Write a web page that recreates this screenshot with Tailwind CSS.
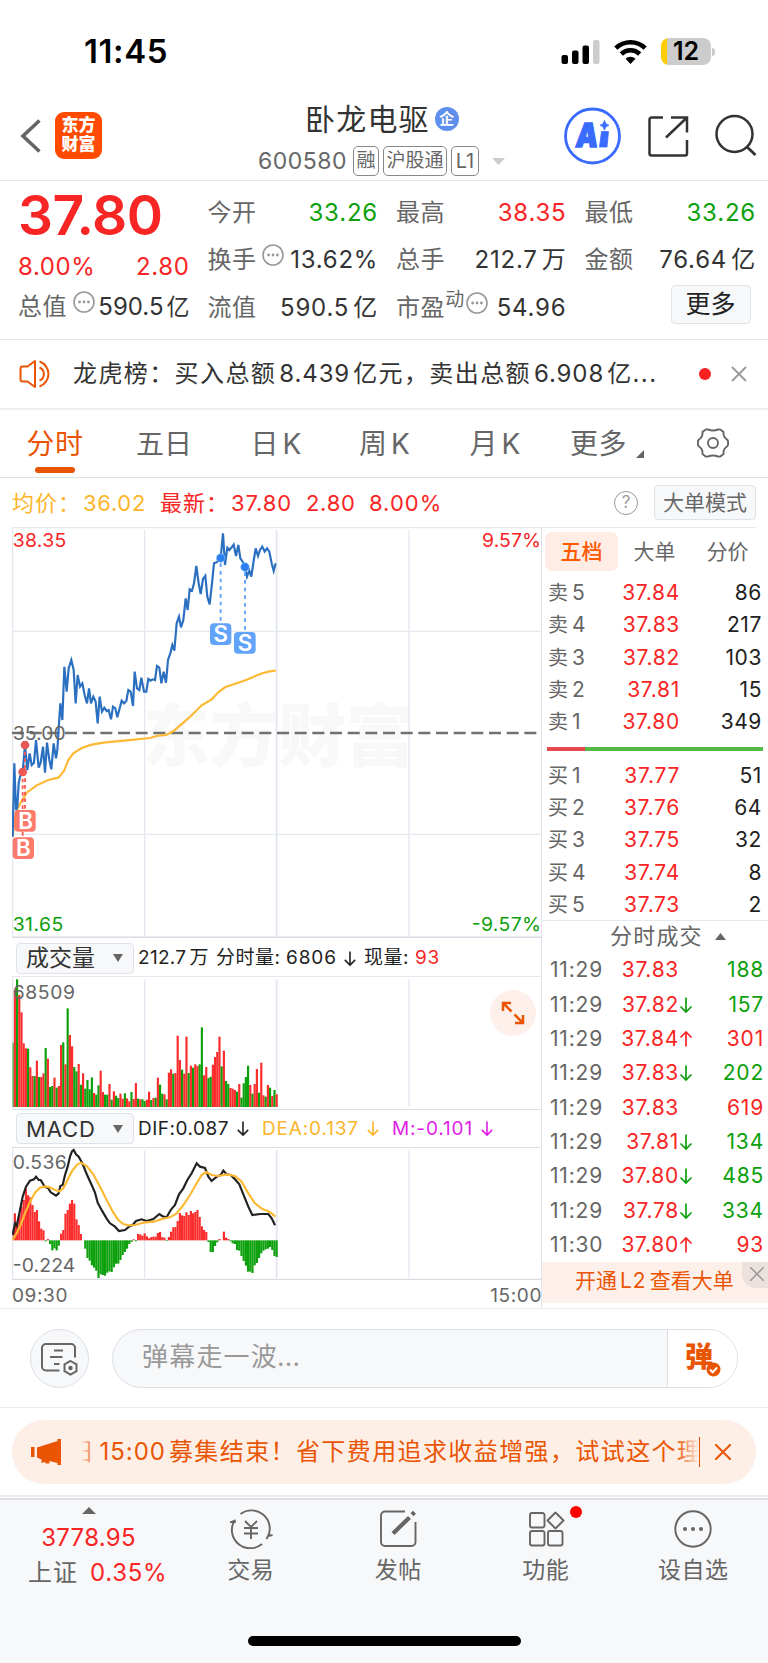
<!DOCTYPE html>
<html lang="zh-CN">
<head>
  <meta charset="UTF-8">
  <meta name="viewport" content="width=device-width, initial-scale=1.0">
  <title>卧龙电驱 600580</title>
  <script src="https://cdn.jsdelivr.net/npm/@tailwindcss/browser@4"></script>
</head>
<body class="w-[768px] h-[1663px] bg-white text-[#333] font-['Inter','Noto_Sans_CJK_SC',sans-serif] whitespace-nowrap overflow-hidden">

  <!-- Shared icons -->
  <svg class="hidden">
    <symbol id="more-dots" viewBox="0 0 22 22">
      <circle cx="11" cy="11" r="10" fill="none" stroke="#999" stroke-width="1.6"/>
      <g fill="#999"><circle cx="6.6" cy="11" r="1.4"/><circle cx="11" cy="11" r="1.4"/><circle cx="15.4" cy="11" r="1.4"/></g>
    </symbol>
    <symbol id="down" viewBox="0 0 14 18">
      <path d="M7 1.500v14.500M1.500 10.500L7 16l5.500-5.500" fill="none" stroke="currentColor" stroke-width="1.7"/>
    </symbol>
    <symbol id="up" viewBox="0 0 14 18">
      <path d="M7 16.500V2M1.500 7.500L7 2l5.500 5.500" fill="none" stroke="currentColor" stroke-width="1.7"/>
    </symbol>
  </svg>

  <!-- Status Bar -->
  <div class="h-[92px] pt-[11px] pl-[84px] pr-[53px] flex items-center text-black">
    <span class="text-[33px] leading-none font-semibold tracking-[0.6px]">11:45</span>
    <div class="ml-auto flex items-center">
      <svg class="w-[39px] h-[26px]" viewBox="0 0 39 26">
        <rect x="0.500" y="16" width="6.500" height="9" rx="2"/>
        <rect x="11" y="11.500" width="6.500" height="13.500" rx="2"/>
        <rect x="21.500" y="6.500" width="6.500" height="18.500" rx="2"/>
        <rect x="32" y="1" width="6.500" height="24" rx="2" fill="#ccc"/>
      </svg>
      <svg class="ml-[14px] w-[33px] h-[26px]" viewBox="0 0 33 26">
        <g fill="none" stroke="#000" stroke-width="4.600">
          <path d="M1.800 9.200a21 21 0 0 1 29.400 0"/>
          <path d="M7.300 15a13.200 13.200 0 0 1 18.400 0"/>
        </g>
        <path d="M16.500 25l-5-5.200a7.200 7.200 0 0 1 10 0z"/>
      </svg>
      <div class="ml-[14px] w-[50px] h-[27px] rounded-[8px] bg-linear-to-r from-[#ffcc00] from-[6px] to-[#ccc] to-[6px] flex items-center justify-center">
        <span class="text-[25px] leading-[27px] font-semibold">12</span>
      </div>
      <span class="ml-[1px] w-[3px] h-[8px] rounded-r-[3px] bg-[#ccc]"></span>
    </div>
  </div>

  <!-- Header -->
  <header class="h-[89px] border-b border-[#e6e6e6] flex">
    <div class="w-[257px] pl-[20px] pt-[20px] flex items-start">
      <svg class="w-[22px] h-[34px] mt-[7px]" viewBox="0 0 22 34"><path d="M19.500 1.500L3 17l16.500 15.500" fill="none" stroke="#666" stroke-width="3.600"/></svg>
      <div class="ml-[13px] w-[47px] h-[47px] rounded-[9px] bg-[#ff4a00] text-white text-[17px] leading-[19px] font-black text-center pt-[4px]">东方<br>财富</div>
    </div>
    <div class="w-[270px] pt-[7px]">
      <div class="pl-[48px] h-[40px] flex items-center">
        <h1 class="text-[30px] leading-[40px] tracking-[1.200px]">卧龙电驱</h1>
        <span class="ml-[5px] w-[24px] h-[24px] rounded-full bg-[#5e8fec] text-white text-[15px] leading-[23px] font-bold text-center">企</span>
      </div>
      <div class="mt-[7px] h-[30px] flex items-center text-[#666]">
        <span class="text-[23px] leading-[30px] tracking-[0.500px] pl-px w-[96px]">600580</span>
        <span class="w-[26px] h-[30px] border border-[#888] rounded-[5px] text-[19px] leading-[28px] text-center">融</span>
        <span class="ml-[4px] w-[64px] h-[30px] border border-[#888] rounded-[5px] text-[19px] leading-[28px] text-center">沪股通</span>
        <span class="ml-[4px] w-[28px] h-[30px] border border-[#888] rounded-[5px] text-[20px] leading-[28px] text-center">L1</span>
        <svg class="ml-[13px] w-[13px] h-[7px]" viewBox="0 0 13 7"><path d="M0 0h13l-6.500 7z" fill="#ccc"/></svg>
      </div>
    </div>
    <div class="pl-[37px] pt-[15px] flex items-start">
      <svg class="w-[58px] h-[58px]" viewBox="0 0 58 58">
        <circle cx="28.500" cy="29" r="27" fill="none" stroke="#3a6bff" stroke-width="2.800"/>
        <text transform="translate(11 39.500) skewX(-6)" font-size="33" font-weight="900" fill="#3a6bff" textLength="22" lengthAdjust="spacingAndGlyphs" stroke="#3a6bff" stroke-width="1.500">A</text>
        <path d="M37.500 24.500h7l-1.500 15.500h-7.500zM40.500 13.500q.8 4 4.500 4.800q-3.700.8-4.500 4.800q-.8-4-4.500-4.800q3.700-.8 4.500-4.800z" fill="#3a6bff" stroke="#3a6bff" stroke-width=".8" stroke-linejoin="round"/>
      </svg>
      <svg class="ml-[25px] mt-[8px] w-[42px] h-[42px]" viewBox="0 0 42 42">
        <path d="M16 2.500H4.500a2 2 0 0 0-2 2v34a2 2 0 0 0 2 2h33.500a2 2 0 0 0 2-2V25M24 2.500h16v15M40 2.500L19 22.500" fill="none" stroke="#333" stroke-width="2.500"/>
      </svg>
      <svg class="ml-[26px] mt-[7px] w-[42px] h-[42px]" viewBox="0 0 42 42">
        <circle cx="19.500" cy="20" r="18" fill="none" stroke="#333" stroke-width="2.500"/>
        <path d="M31.500 32.500l9 8.500" stroke="#333" stroke-width="2.800"/>
      </svg>
    </div>
  </header>

  <!-- Quote -->
  <section class="h-[159px] border-b border-[#e6e6e6] pl-[19px] pr-[13px] pt-[8px] grid grid-cols-4 gap-x-[18px] text-[24px] leading-[32px]">
    <div class="-ml-px">
      <div class="h-[53px] flex items-center text-[55px] leading-none font-semibold tracking-[-0.600px] text-[#f82525]">37.80</div>
      <div class="h-[49px] flex items-center justify-between text-[#f82525] tracking-[0.600px]"><span>8.00%</span><span>2.80</span></div>
      <div class="h-[32px] flex items-center">
        <span class="text-[#666] tracking-[0.600px]">总值</span>
        <svg class="ml-[6px] -mt-[10px] w-[22px] h-[22px]"><use href="#more-dots"/></svg>
        <span class="ml-auto flex items-baseline"><span>590.5</span><span class="ml-[3px] text-[23px]">亿</span></span>
      </div>
    </div>
    <div>
      <div class="h-[47.500px] flex items-center justify-between"><span class="text-[#666] tracking-[0.600px]">今开</span><span class="tracking-[0.800px] text-[#0ca00c]">33.26</span></div>
      <div class="h-[47.500px] flex items-center"><span class="text-[#666] tracking-[0.600px]">换手</span>
        <svg class="ml-[5px] -mt-[10px] w-[22px] h-[22px]"><use href="#more-dots"/></svg>
        <span class="ml-auto tracking-[0.700px]">13.62%</span></div>
      <div class="h-[47.500px] flex items-center justify-between"><span class="text-[#666] tracking-[0.600px]">流值</span><span class="tracking-[0.800px]">590.5<span class="ml-[4px]">亿</span></span></div>
    </div>
    <div>
      <div class="h-[47.500px] flex items-center justify-between"><span class="text-[#666] tracking-[0.600px]">最高</span><span class="tracking-[0.800px] text-[#f82525]">38.35</span></div>
      <div class="h-[47.500px] flex items-center justify-between"><span class="text-[#666] tracking-[0.600px]">总手</span><span class="tracking-[0.800px]">212.7<span class="ml-[4px]">万</span></span></div>
      <div class="h-[47.500px] flex items-center"><span class="text-[#666] tracking-[0.600px]">市盈</span><span class="text-[#666] text-[19px] -mt-[15px]">动</span>
        <svg class="ml-[2px] -mt-[10px] w-[22px] h-[22px]"><use href="#more-dots"/></svg>
        <span class="ml-auto tracking-[0.800px]">54.96</span></div>
    </div>
    <div>
      <div class="h-[47.500px] flex items-center justify-between"><span class="text-[#666] tracking-[0.600px]">最低</span><span class="tracking-[0.800px] -mr-px text-[#0ca00c]">33.26</span></div>
      <div class="h-[47.500px] flex items-center justify-between"><span class="text-[#666] tracking-[0.600px]">金额</span><span class="tracking-[0.800px] -mr-px">76.64<span class="ml-[4px]">亿</span></span></div>
      <button class="ml-[86px] mt-[1px] block w-[80px] h-[39px] rounded-[4px] border border-[#dfe2e8] bg-[#f7f8fa] text-[25px] leading-[37px] text-[#222]">更多</button>
    </div>
  </section>

  <!-- News -->
  <section class="h-[70px] border-b-2 border-[#eee] pl-[19px] pr-[21px] flex items-center">
    <svg class="w-[34px] h-[30px]" viewBox="0 0 34 30" fill="none" stroke="#ea5504" stroke-width="2">
      <path d="M16 2v26L8.500 22.500H3.500Q1.500 22.500 1.500 20.500v-11Q1.500 7.500 3.500 7.500h5z" stroke-linejoin="round"/>
      <path d="M20.500 8.500a7 7 0 0 1 0 13M20.500 2.500a13.200 13.200 0 0 1 0 25"/>
    </svg>
    <p class="ml-[20px] text-[24px] leading-[32px] tracking-[1.400px] flex items-baseline">龙虎榜：买入总额<span class="tracking-[0.900px] ml-[3px] mr-[3px]">8.439</span>亿元，卖出总额<span class="tracking-[0.900px] ml-[3px] mr-[3px]">6.908</span>亿...</p>
    <span class="ml-auto w-[12px] h-[12px] rounded-full bg-[#f82020]"></span>
    <svg class="ml-[20px] w-[16px] h-[16px]" viewBox="0 0 16 16"><path d="M1 1l14 14M15 1L1 15" stroke="#999" stroke-width="1.800"/></svg>
  </section>

  <!-- Period Tabs -->
  <nav class="h-[68px] border-b border-[#dddfe6] flex text-[28px] leading-[68px] text-[#666] text-center">
    <div class="w-[110px] relative tracking-[0.400px] text-[#ea5504]">分时<span class="absolute left-[35px] top-[57px] w-[40px] h-[6px] rounded-full bg-[#ea5504]"></span></div>
    <div class="w-[108px]">五日</div>
    <div class="w-[116px]">日<span class="ml-[4px]">K</span></div>
    <div class="w-[101px]">周<span class="ml-[4px]">K</span></div>
    <div class="w-[120px]">月<span class="ml-[4px]">K</span></div>
    <div class="w-[100px] pl-[15px] flex items-center tracking-[0.500px]">更多<svg class="ml-[9px] mt-[20px] w-[8px] h-[8px]" viewBox="0 0 8 8"><path d="M8 0v8H0z" fill="#666"/></svg></div>
    <svg class="ml-[42px] mt-[17px] w-[32px] h-[32px]" viewBox="-16 -16 32 32" fill="none" stroke="#666" stroke-width="1.900">
      <path d="M-8-13Q-7-14-5-13.500Q0-11.500 5-13.500Q7-14 8-13L10.500-11Q10-6 14-3.500Q15.500-2 15 0Q15.500 2 14 3.500Q10 6 10.500 11L8 13Q7 14 5 13.500Q0 11.500-5 13.500Q-7 14-8 13L-10.500 11Q-10 6-14 3.500Q-15.500 2-15 0Q-15.500-2-14-3.500Q-10-6-10.500-11Z"/>
      <circle r="5"/>
    </svg>
  </nav>

  <!-- Average / Latest -->
  <div class="h-[49px] pl-[12px] pr-[12px] flex items-center text-[22px] leading-[30px]">
    <div class="flex text-[#fdb52b]"><span class="w-[71px] tracking-[1px]">均价：</span><span class="w-[77px] tracking-[0.700px]">36.02</span></div>
    <div class="flex text-[#f82525]"><span class="w-[71px] tracking-[1px]">最新：</span><span class="w-[75px] tracking-[0.900px]">37.80</span><span class="w-[63px] tracking-[0.700px]">2.80</span><span class="tracking-[1px]">8.00%</span></div>
    <span class="ml-auto w-[24px] h-[24px] rounded-full border-[1.500px] border-[#999] text-[#999] text-[17px] leading-[21px] text-center">?</span>
    <button class="ml-[16px] w-[102px] h-[35px] rounded-[4px] border border-[#dfe2e8] bg-[#f7f8fa] text-[21px] leading-[33px] text-[#666]">大单模式</button>
  </div>

  <!-- Chart Area -->
  <main class="h-[781px] flex">
    <div class="w-[542px] pl-[12px] border-r border-[#dfe2e8]">
      <!-- Price -->
      <svg class="block w-[530px] h-[411px]" viewBox="36 -339 1590 1233">
        <text x="426" y="362" font-size="204" font-weight="900" fill="#f8f8f8" textLength="816">东方财富</text>
        <g stroke="#e4e8ef" stroke-width="4" fill="none">
          <path d="M36-337H1626M38-339V894"/>
          <path d="M434-330V888M1227-330V888M36-26H1626M36 583H1626"/>
          <path d="M830-330V888" stroke-width="6"/>
        </g>
        <path d="M36 892H1626" stroke="#d9dce3" stroke-width="5"/>
        <path d="M36 279H1610" stroke="#707070" stroke-width="7" stroke-dasharray="36 17"/>
        <polyline fill="none" stroke="#fdb933" stroke-width="6.500" points="38,590 44,540 52,508 60,492 80,458 110,436 145,420 175,413 192,393 205,360 220,340 245,324 275,314 310,308 380,301 450,294 470,288 500,284 520,274 550,248 575,226 605,196 635,178 655,157 675,142 710,130 730,123 755,113 780,102 805,95 827,92"/>
        <polyline fill="none" stroke="#2a6fc0" stroke-width="6.500" points="38,590 43,370 48,510 52,500 56,430 60,410 68,395 75,315 82,390 89,340 95,375 102,368 108,300 116,383 122,368 129,320 135,398 141,308 148,360 154,388 161,310 168,355 172,330 177,250 181,190 187,240 193,80 200,155 206,85 214,60 221,90 227,190 233,105 240,140 247,130 254,165 261,190 267,145 273,190 280,170 287,185 293,250 299,170 306,215 313,203 320,213 326,210 333,238 339,200 346,205 352,232 359,205 365,182 372,190 379,183 385,150 392,155 399,198 404,95 411,145 418,150 424,113 432,155 439,155 445,117 452,122 458,118 465,120 471,78 478,83 484,130 491,95 498,128 504,60 511,40 517,15 523,32 530,-50 537,-70 543,-38 550,-60 557,-125 563,-90 569,-152 576,-148 582,-170 589,-222 596,-170 602,-138 609,-183 616,-193 622,-130 629,-107 636,-170 642,-230 650,-233 662,-246 669,-320 675,-225 682,-277 688,-270 695,-278 701,-286 708,-252 715,-285 721,-245 728,-235 735,-219 741,-190 748,-208 754,-190 761,-237 767,-275 774,-252 780,-270 787,-280 794,-265 801,-275 808,-265 815,-230 821,-207 827,-230"/>
        <!-- Sell markers -->
        <g fill="#2b7ff0" stroke="#9cc4ff" stroke-width="2"><circle cx="662" cy="-246" r="13"/><circle cx="735" cy="-219" r="13"/></g>
        <path d="M662-230V-50M735-203V-24" stroke="#5aa0ff" stroke-width="5.500" stroke-dasharray="11 12"/>
        <g fill="#62a3fc"><rect x="630" y="-50" width="64" height="65" rx="12"/><rect x="702" y="-24" width="65" height="65" rx="12"/></g>
        <!-- Buy markers -->
        <g fill="#e4585a"><circle cx="75" cy="315" r="13"/><circle cx="68" cy="396" r="13"/></g>
        <path d="M75 315V510M68 396V590" stroke="#fb5a50" stroke-width="5.500" stroke-dasharray="11 9"/>
        <g fill="#fb7060" fill-opacity=".93"><rect x="43" y="510" width="64" height="65" rx="12"/><rect x="38" y="592" width="64" height="65" rx="12"/></g>
        <g fill="#fff" font-size="67" font-weight="600" text-anchor="middle">
          <text x="662" y="7">S</text><text x="735" y="33">S</text><text x="77" y="567">B</text><text x="70" y="649">B</text>
        </g>
        <g font-size="58">
          <text x="38" y="-280" fill="#f82525" textLength="161">38.35</text>
          <text x="1446" y="-280" fill="#f82525" textLength="177">9.57%</text>
          <text x="38" y="299" fill="#666" textLength="159">35.00</text>
          <text x="38" y="874" fill="#0ca00c" textLength="152">31.65</text>
          <text x="1415" y="874" fill="#0ca00c" textLength="208">-9.57%</text>
        </g>
      </svg>

      <!-- Volume -->
      <div class="h-[39px] pl-[4px] pt-[2px] border-b border-[#e4e8ef] flex items-center text-[19px] text-[#222] relative">
        <button class="w-[118px] h-[31px] rounded-[4px] border border-[#dfe2e8] bg-[#f7f8fa] pl-[9px] pr-[10px] flex items-center text-[23px] leading-[28px] text-[#333]">成交量<span class="ml-auto border-x-[5px] border-x-transparent border-t-[8px] border-t-[#666]"></span></button>
        <span class="ml-[4px] mt-[1px] w-[78px] tracking-[0.300px]">212.7<span class="ml-[3px]">万</span></span>
        <span class="mt-[1px] w-[70px] tracking-[0.500px]">分时量:</span>
        <span class="mt-[1px] w-[57px] tracking-[0.900px]">6806</span>
        <svg class="w-[14px] h-[17px]"><use href="#down"/></svg>
        <span class="mt-[1px] ml-[7px] w-[51px] tracking-[0.500px]">现量:</span>
        <span class="mt-[1px] tracking-[0.600px] text-[#f82525]">93</span>
        <span class="absolute left-[478px] top-[52px] w-[46px] h-[46px] rounded-full bg-[#fdf0ea] flex items-center justify-center">
          <svg class="w-[24px] h-[24px]" viewBox="0 0 24 24"><path d="M10 2H2v8M2 2l8.500 8.500M14 22h8v-8M22 22l-8.500-8.500" fill="none" stroke="#ea5504" stroke-width="2.500"/></svg>
        </span>
      </div>
      <svg class="block w-[530px] h-[132px]" viewBox="36 141 1590 396">
        <g stroke="#e4e8ef" stroke-width="4"><path d="M38 141V537M434 148V530M1227 148V530"/><path d="M830 148V530" stroke-width="6"/></g>
        <g id="volume-bars"></g>
        <text x="38" y="206" font-size="58" fill="#666" textLength="187">68509</text>
      </svg>

      <!-- MACD -->
      <div class="h-[39px] pl-[4px] border-y border-[#dcdfe6] flex items-center text-[19px] text-[#222]">
        <button class="w-[118px] h-[31px] rounded-[4px] border border-[#dfe2e8] bg-[#f7f8fa] pl-[9px] pr-[10px] flex items-center text-[22px] leading-[28px] tracking-[0.900px] text-[#333]">MACD<span class="ml-auto border-x-[5px] border-x-transparent border-t-[8px] border-t-[#666]"></span></button>
        <span class="ml-[4px] mt-[1px] w-[98px] tracking-[0.500px]">DIF:0.087</span>
        <svg class="w-[14px] h-[17px]"><use href="#down"/></svg>
        <span class="ml-[12px] mt-[1px] w-[104px] tracking-[0.850px] text-[#fdb52b]">DEA:0.137</span>
        <svg class="w-[14px] h-[17px] text-[#fdb52b]"><use href="#down"/></svg>
        <span class="ml-[12px] mt-[1px] w-[88px] tracking-[0.850px] text-[#e01ee8]">M:-0.101</span>
        <svg class="w-[14px] h-[17px] text-[#e01ee8]"><use href="#down"/></svg>
      </div>
      <svg class="block w-[530px] h-[132px]" viewBox="36 654 1590 396">
        <g stroke="#e4e8ef" stroke-width="4"><path d="M38 654V1050M434 660V1044M1227 660V1044"/><path d="M830 660V1044" stroke-width="6"/></g>
        <path d="M36 1048H1626" stroke="#d9dce3" stroke-width="4"/>
        <g id="macd-bars"></g>
        <polyline fill="none" stroke="#222" stroke-width="6.500" points="38,915 45,880 50,888 60,840 68,800 78,770 90,752 102,748 108,740 116,750 122,750 134,770 145,775 152,787 162,793 168,797 176,790 181,768 188,765 195,735 203,710 210,680 216,664 221,660 228,673 236,680 247,700 260,732 275,765 285,788 293,818 306,842 320,866 330,880 345,890 357,903 375,900 390,888 398,885 408,873 425,868 440,873 460,867 478,852 490,860 500,862 512,840 525,825 537,793 550,775 562,750 575,730 590,700 600,710 615,714 625,740 635,753 650,740 662,735 670,722 680,733 692,735 705,748 718,763 730,793 745,830 757,855 780,852 805,852 815,865 825,886"/>
        <polyline fill="none" stroke="#fdb933" stroke-width="6.500" points="38,930 50,910 62,885 75,850 90,815 105,788 120,773 135,769 150,772 165,780 178,784 190,775 200,755 215,725 230,705 243,698 260,708 280,733 300,770 320,810 340,848 355,870 370,882 385,886 405,885 430,878 460,875 490,866 510,862 530,850 550,825 570,795 590,760 605,735 618,726 635,735 655,738 680,733 705,738 725,755 745,790 765,820 785,836 805,844 815,850 826,860"/>
        <g font-size="58" fill="#666">
          <text x="38" y="718" textLength="162">0.536</text>
          <text x="38" y="1025" textLength="188">-0.224</text>
        </g>
      </svg>
      <div class="h-[28px] pt-[5px] flex items-center justify-between text-[19px] tracking-[0.600px] text-[#666]"><span>09:30</span><span class="-mr-px">15:00</span></div>
    </div>

    <!-- Order Book -->
    <aside class="w-[226px] text-[21px] leading-[30px]">
      <div class="h-[49px] border-t border-[#e4e8ef] mr-[12px] pl-[3px] pt-[4px] flex text-[#666] leading-[39px] text-center">
        <span class="w-[73px] h-[39px] shrink-0 rounded-[7px] bg-[#ffece4] font-medium text-[#ff5a00]">五档</span>
        <span class="w-[73px] shrink-0">大单</span>
        <span class="w-[73px] shrink-0">分价</span>
      </div>
      <div id="asks" class="pt-px pl-[6px] pr-[6px]"></div>
      <div class="ml-[5px] mt-[9px] w-[216px] h-[4px] flex"><span class="w-[38px] bg-[#e5484d]"></span><span class="flex-1 bg-[#55b947]"></span></div>
      <div id="bids" class="pl-[6px] pr-[6px] mt-[8px]"></div>
      <div class="-mt-px h-[32px] border-t border-[#e4e8ef] pl-[68px] flex items-center text-[22px] text-[#666] tracking-[1.200px]">分时成交<svg class="ml-[12px] w-[11px] h-[7px]" viewBox="0 0 11 7"><path d="M0 7h11L5.500 0z" fill="#666"/></svg></div>
      <div id="ticks" class="pt-px pl-[8px] pr-[4px]"></div>
      <div class="h-[41px] bg-[#fdf0ea] pl-[33px] relative text-[21px] leading-[38px] text-[#ea5504]">
        开通<span class="mx-[3px] tracking-[1px]">L2</span>查看大单
        <span class="absolute right-0 top-0 w-[26px] h-[26px] rounded-bl-[14px] bg-[#ebe2de] flex items-center justify-center">
          <svg class="ml-[4px] -mt-[2px] w-[14px] h-[14px]" viewBox="0 0 14 14"><path d="M0 0l14 14M14 0L0 14" stroke="#999" stroke-width="1.500"/></svg>
        </span>
      </div>
    </aside>
  </main>

  <!-- Comment Input -->
  <section class="h-[100px] border-y border-y-[#ececec] pl-[30px] pr-[30px] pt-[20px] flex items-start">
    <span class="w-[59px] h-[59px] rounded-full border border-[#dcdfe6] bg-[#f7f8fa] flex items-center justify-center">
      <svg class="w-[37px] h-[34px]" viewBox="0 0 37 34" fill="none" stroke="#666" stroke-width="2">
        <path d="M18.500 28.500H5a4 4 0 0 1-4-4V6a4 4 0 0 1 4-4h25a4 4 0 0 1 4 4v9.500M13 8.500h9M9 15h12.500M13 22h5.500"/>
        <path d="M29.500 19l6 3.400v6.800l-6 3.400-6-3.400v-6.800z"/><circle cx="29.500" cy="26" r="1.200" fill="#666"/>
      </svg>
    </span>
    <div class="ml-[23px] w-[626px] h-[59px] rounded-full border border-[#dcdfe6] bg-[#f7f8fa] flex overflow-hidden">
      <span class="w-[555px] pl-[29px] text-[26px] leading-[53px] tracking-[1.200px] text-[#999] border-r border-[#dcdfe6]">弹幕走一波<span class="-ml-px tracking-[0.200px]">...</span></span>
      <span class="flex-1 bg-white relative text-[28px] leading-[55px] font-black text-[#ea5504] pl-[17px]">弹<svg class="absolute left-[38px] top-[32px] w-[15px] h-[15px]" viewBox="0 0 15 15"><circle cx="7.500" cy="7.500" r="7" fill="#ea5504"/><path d="M4 7.500l2.700 2.800 4.500-5" fill="none" stroke="#fff" stroke-width="2"/></svg></span>
    </div>
  </section>

  <!-- Notice -->
  <section class="h-[89px] px-[12px] pt-[12px] border-b-2 border-[#ececec]">
    <div class="h-[64px] rounded-full bg-[#fdeee6] pl-[19px] flex items-center text-[#ea5504]">
      <svg class="w-[31px] h-[26px]" viewBox="0 0 31 26" fill="#ea5504"><path d="M0 8h3.500v10H0zM6 8.500L26.500 2V0h3.500v26h-3.500v-2L18.500 22v2.500h-3.500L13.500 23l-3 1v-3.500L6 18.500z"/></svg>
      <div class="ml-[19px] w-[618px] h-[36px] overflow-hidden relative text-[24px] leading-[36px]">
        <p class="-ml-[11px] tracking-[1.400px]">日<span class="ml-[4px] mr-[3px] tracking-[1px]">15:00</span>募集结束！省下费用追求收益增强，试试这个理</p>
        <span class="absolute left-0 top-0 w-[12px] h-[36px] bg-linear-to-r from-[#fdeee6] to-[#fdeee6]/20"></span>
        <span class="absolute right-0 top-0 w-[20px] h-[36px] bg-linear-to-l from-[#fdeee6] to-[#fdeee6]/10"></span>
      </div>
      <span class="w-px h-[30px] bg-[#ea5504]"></span>
      <svg class="ml-[15px] w-[16px] h-[16px]" viewBox="0 0 16 16"><path d="M0 0l16 16M16 0L0 16" stroke="#ea5504" stroke-width="2"/></svg>
    </div>
  </section>

  <!-- Bottom Navigation -->
  <footer class="mt-px h-[166px] border-t-2 border-[#dfe1e6] bg-[#f7f8fa] relative flex text-[23px] leading-[32px] text-[#666]">
    <div class="w-[177px] pt-[7px] flex flex-col items-center">
      <svg class="w-[14px] h-[7px]" viewBox="0 0 14 7"><path d="M0 7h14L7 0z" fill="#666"/></svg>
      <span class="mt-[8px] text-[24px] tracking-[0.300px] text-[#f82525]">3778.95</span>
      <div class="mt-[3px] ml-[31px] w-[152px] flex text-[24px]"><span class="w-[62px] tracking-[1px]">上证</span><span class="tracking-[0.700px] text-[#f82525]">0.35%</span></div>
    </div>
    <div class="w-[147.500px] pt-[9px] flex flex-col items-center">
      <svg class="w-[44px] h-[40px]" viewBox="-22 -20 44 40" fill="none" stroke="#666" stroke-width="1.900">
        <path d="M-10.500-15A18.300 18.300 0 0 1 17 7.500M15.500 10l1.500-3 4.500-1M11 15A18.300 18.300 0 0 1-17-7.500M-21-6.500l4.700-2 .3 2.500"/>
        <path d="M-6-8L0-2l6-6M0-2v12M-7-1H7M-7 4.500H7"/>
      </svg>
      <span class="mt-[5px] tracking-[0.500px]">交易</span>
    </div>
    <div class="w-[147.500px] pt-[9px] flex flex-col items-center">
      <svg class="w-[38px] h-[40px]" viewBox="-19 -20 38 40" fill="none" stroke="#666" stroke-width="1.900">
        <path d="M7-17.500H-13a4 4 0 0 0-4 4v26.500a4 4 0 0 0 4 4H13.500a4 4 0 0 0 4-4V-7"/>
        <path d="M-5 4.500L11.500-11.500M14-14.200l2.500-2.500" stroke-width="4.200"/>
      </svg>
      <span class="mt-[5px] tracking-[0.500px]">发帖</span>
    </div>
    <div class="w-[147.500px] pt-[9px] flex flex-col items-center relative">
      <svg class="w-[38px] h-[40px]" viewBox="-19 -20 38 40" fill="none" stroke="#666" stroke-width="1.900">
        <rect x="-16" y="-16" width="14.500" height="14.500" rx="2"/><rect x="-16" y="2" width="14.500" height="14.500" rx="2"/><rect x="2" y="2" width="14.500" height="14.500" rx="2"/>
        <path d="M9.500-16.500l8 8-8 8-8-8z" stroke-linejoin="round"/>
      </svg>
      <span class="mt-[5px] tracking-[0.500px]">功能</span>
      <span class="absolute left-[98px] top-[6px] w-[12px] h-[12px] rounded-full bg-[#ff0000]"></span>
    </div>
    <div class="w-[147.500px] pt-[9px] flex flex-col items-center">
      <svg class="w-[40px] h-[40px]" viewBox="-20 -20 40 40"><circle r="17.700" fill="none" stroke="#666" stroke-width="1.900"/><g fill="#666"><circle cx="-8" r="2"/><circle r="2"/><circle cx="8" r="2"/></g></svg>
      <span class="mt-[5px] tracking-[0.500px]">设自选</span>
    </div>
    <span class="absolute left-[248px] top-[136px] w-[273px] h-[10px] rounded-full bg-black"></span>
  </footer>

  <script>
    const RED = "#fa2c2c";
    const GREEN = "#0ca00c";

    // Order book rows
    const asks = [["卖", 5, "37.84", 86], ["卖", 4, "37.83", 217], ["卖", 3, "37.82", 103], ["卖", 2, "37.81", 15], ["卖", 1, "37.80", 349]];
    const bids = [["买", 1, "37.77", 51], ["买", 2, "37.76", 64], ["买", 3, "37.75", 32], ["买", 4, "37.74", 8], ["买", 5, "37.73", 2]];
    const bookRow = ([side, level, price, volume]) => `
      <div class="h-[32.300px] flex items-center">
        <span class="w-[43px] text-[20px] text-[#666]">${side}<span class="ml-[4px] text-[21px]">${level}</span></span>
        <span class="w-[89px] text-right tracking-[0.700px] text-[#f82525]">${price}</span>
        <span class="ml-auto tracking-[0.600px] text-[#222]">${volume}</span>
      </div>`;
    document.getElementById("asks").innerHTML = asks.map(bookRow).join("");
    document.getElementById("bids").innerHTML = bids.map(bookRow).join("");

    // Trades: time, price, arrow, volume, volume direction
    const ticks = [
      ["11:29", "37.83", "", 188, "g"], ["11:29", "37.82", "down", 157, "g"], ["11:29", "37.84", "up", 301, "r"],
      ["11:29", "37.83", "down", 202, "g"], ["11:29", "37.83", "", 619, "r"], ["11:29", "37.81", "down", 134, "g"],
      ["11:29", "37.80", "down", 485, "g"], ["11:29", "37.78", "down", 334, "g"], ["11:30", "37.80", "up", 93, "r"]
    ];
    document.getElementById("ticks").innerHTML = ticks.map(([time, price, arrow, volume, dir]) => `
      <div class="h-[34.370px] flex items-center">
        <span class="w-[54px] tracking-[0.800px] text-[#666]">${time}</span>
        <span class="w-[75px] text-right tracking-[0.700px] text-[#f82525]">${price}</span>
        <svg class="w-[14px] h-[18px] ${arrow === "up" ? "text-[#f82525]" : "text-[#0ca00c]"}">${arrow ? `<use href="#${arrow}"/>` : ""}</svg>
        <span class="ml-auto tracking-[0.800px] ${dir === "r" ? "text-[#f82525]" : "text-[#0ca00c]"}">${volume}</span>
      </div>`).join("");

    // One bar per minute
    const STEP = 6.6;
    const bar = (i, y, h, color) => `<rect x="${(38 + i * STEP - (i ? 3.2 : 0)).toFixed(1)}" y="${y}" width="${i ? 6.5 : 3}" height="${h}" fill="${color}"/>`;

    const volume = "g338 r180 g148 r195 r247 r340 r355 g356 r412 r438 g438 r392 g441 r441 r430 g354 r386 g471 g468 r443 g473 r468 r345 g337 r403 g235 r315 r349 g411 g424 r402 g464 r430 g476 g450 g478 g442 r489 g494 g466 r422 r486 g494 g494 r462 g509 r484 g497 g504 r491 r506 g490 r505 r514 g486 r507 r459 g506 r508 g508 g513 r509 r485 g510 r504 g503 r443 g464 g491 r493 g508 r428 r418 g431 r429 r317 r390 g419 r431 r320 g429 r407 g413 r403 r408 g403 g292 r436 r411 g444 g440 r404 r381 r366 r320 g409 r362 g453 g462 r474 r476 r480 g485 r462 g503 g460 g441 g407 r465 g491 r462 r417 g488 r398 r496 g500 r465 g473 r498 g480 r493".split(" ");
    document.getElementById("volume-bars").innerHTML = volume.map((v, i) => {
      const top = Number(v.slice(1));
      return bar(i, top, 531 - top, v[0] === "r" ? RED : GREEN);
    }).join("");

    const ZERO = 931;
    const macd = [900, 850, 880, 855, 830, 810, 776, 796, 802, 825, 846, 840, 874, 896, 901, 934, 927, 942, 961, 955, 961, 947, 911, 900, 851, 840, 821, 810, 821, 868, 885, 912, 931, 956, 984, 992, 1006, 1013, 1022, 1044, 1033, 1035, 1037, 1028, 1024, 1026, 1012, 1001, 1001, 990, 975, 966, 956, 942, 936, 928, 934, 912, 913, 917, 910, 919, 925, 921, 920, 920, 909, 906, 921, 923, 933, 921, 905, 892, 891, 873, 849, 856, 858, 847, 855, 843, 850, 846, 840, 861, 889, 900, 906, 936, 966, 966, 948, 937, 927, 931, 905, 923, 927, 934, 940, 942, 960, 962, 978, 993, 1007, 1025, 1025, 1029, 1006, 999, 984, 970, 962, 958, 956, 951, 960, 978, 981];
    document.getElementById("macd-bars").innerHTML = macd.map((y, i) =>
      bar(i, Math.min(y, ZERO), Math.abs(y - ZERO), y < ZERO ? RED : GREEN)
    ).join("");
  </script>
</body>
</html>
